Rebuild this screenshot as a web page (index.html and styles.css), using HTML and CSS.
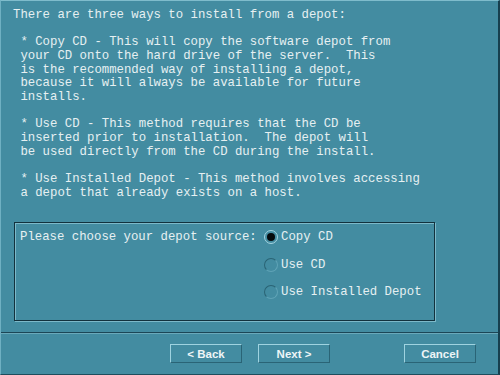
FILE: index.html
```
<!DOCTYPE html>
<html>
<head><meta charset="utf-8"><link rel="stylesheet" href="styles.css"></head>
<body>
<div class="win">
  <div class="content">
<pre class="info">There are three ways to install from a depot:

 * Copy CD - This will copy the software depot from
 your CD onto the hard drive of the server.  This
 is the recommended way of installing a depot,
 because it will always be available for future
 installs.

 * Use CD - This method requires that the CD be
 inserted prior to installation.  The depot will
 be used directly from the CD during the install.

 * Use Installed Depot - This method involves accessing
 a depot that already exists on a host.</pre>
    <div class="group">
      <div class="prompt">Please choose your depot source:</div>
      <div class="options">
        <div class="opt"><span class="radio on"></span>Copy CD</div>
        <div class="opt"><span class="radio"></span>Use CD</div>
        <div class="opt"><span class="radio"></span>Use Installed Depot</div>
      </div>
    </div>
  </div>
  <div class="footer">
    <button class="btn">&lt; Back</button>
    <button class="btn">Next &gt;</button>
    <span class="spacer"></span>
    <button class="btn">Cancel</button>
  </div>
</div>
</body>
</html>
```
FILE: styles.css
```
html, body { margin: 0; padding: 0; }
body { width: 500px; height: 375px; background: #438ca1; overflow: hidden; }
.win {
  box-sizing: border-box;
  width: 500px; height: 375px;
  background: #438ca1;
  border-top: 1px solid #7fbccc;
  border-left: 1px solid #6fb0c2;
  border-right: 2px solid #163f4e;
  border-bottom: 1px solid #1e4d5d;
  display: flex; flex-direction: column;
}
.content {
  padding: 8px 0 0 12px;
  height: 332px; flex: none;
  box-sizing: border-box;
  border-bottom: 1px solid #1c4656;
}
.info {
  margin: 0;
  font-family: "Liberation Mono", monospace;
  font-size: 12.33px; line-height: 13.65px;
  color: #e6f0f2;
}
.group {
  margin: 22px 0 0 1px;
  width: 421px; height: 99px;
  box-sizing: border-box;
  border: 1px solid #12313d;
  box-shadow: 1px 1px 0 #7cb9c9, inset 1px 1px 0 #7cb9c9;
  display: flex;
  font-family: "Liberation Mono", monospace;
  font-size: 12.33px;
  color: #e6f0f2;
  padding: 7px 0 0 5px;
}
.prompt { width: 244px; line-height: 14px; }
.options { display: flex; flex-direction: column; gap: 13.5px; }
.opt { display: flex; align-items: center; line-height: 14px; height: 14px; }
.radio {
  width: 14px; height: 14px; border-radius: 50%;
  box-sizing: border-box;
  border: 1px solid #37778a;
  border-top-color: #2a6374; border-left-color: #2a6374;
  border-bottom-color: #5fa3b6; border-right-color: #5fa3b6;
  margin-right: 3px;
  position: relative;
  flex: none;
}
.radio.on { border-color: #a5d4e0; background: #438ca1; }
.radio.on::after {
  content: ""; position: absolute; left: 2px; top: 2px;
  width: 8px; height: 8px; border-radius: 50%; background: #050a0c;
}
.footer {
  flex: 1;
  border-top: 1px solid #6aa9ba;
  display: flex; align-items: flex-start;
  padding: 10px 22px 0 169px;
  gap: 16px;
}
.spacer { flex: 1; }
.btn {
  width: 72px; height: 19px;
  box-sizing: border-box;
  background: #438ca1;
  border-top: 1px solid #9fd3e0;
  border-left: 1px solid #9fd3e0;
  border-right: 1px solid #2a6476;
  border-bottom: 1px solid #2a6476;
  color: #eef5f7;
  font-family: "Liberation Sans", Arial, sans-serif;
  font-weight: bold; font-size: 11.5px;
  padding: 0; margin: 0;
}
```
